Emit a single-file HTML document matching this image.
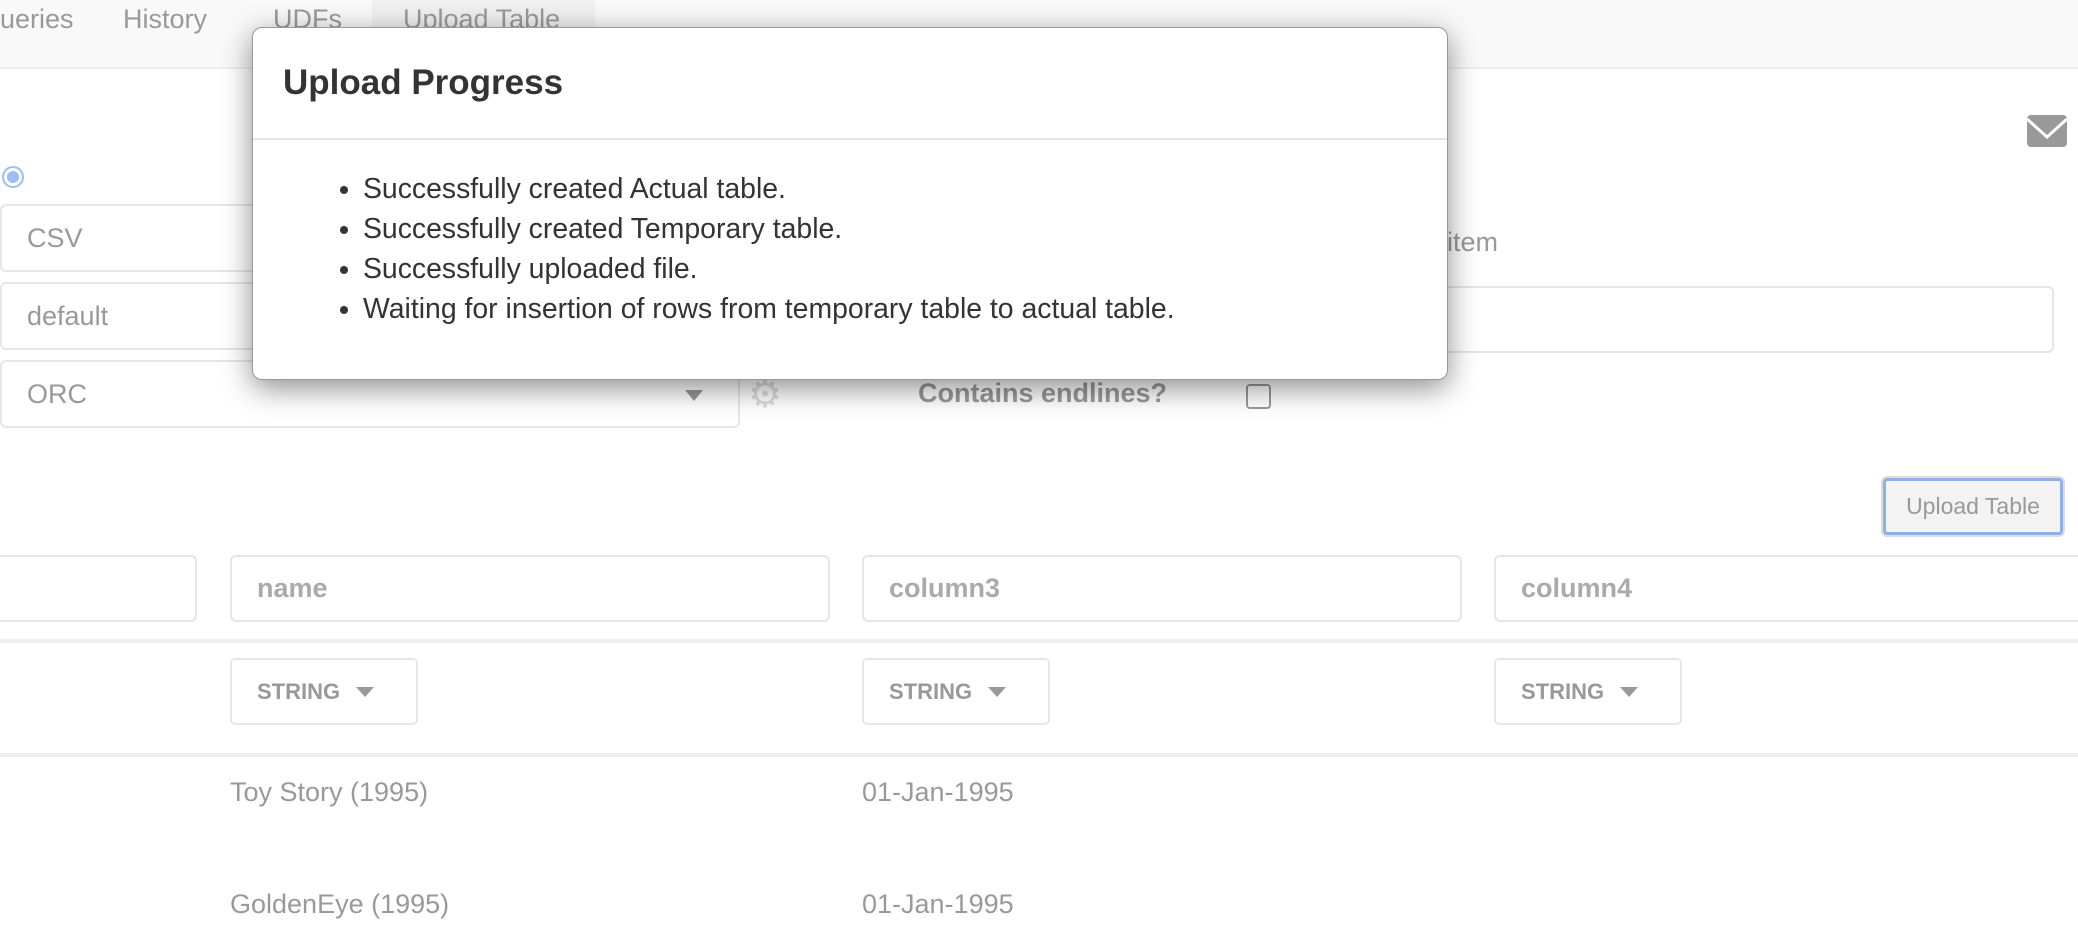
<!DOCTYPE html>
<html><head><meta charset="utf-8"><style>
*{box-sizing:border-box;margin:0;padding:0}
body{width:2078px;height:942px;overflow:hidden;background:#fff;font-family:"Liberation Sans",Arial,sans-serif;position:relative;color:#999}
.abs{position:absolute}
.tabs{left:0;top:0;width:2078px;height:69px;background:#f9f9f9;border-bottom:2px solid #eee}
.tab{position:absolute;top:0;font-size:27px;line-height:38px;color:#999}
.inp{position:absolute;border:2px solid #e6e6e6;border-radius:6px;background:#fff;font-size:27px;color:#999;padding-left:25px;display:flex;align-items:center}
.ph{font-weight:bold;color:#aaa}
.sbtn{position:absolute;border:2px solid #e6e6e6;border-radius:5px;font-size:22px;font-weight:bold;color:#999;display:flex;align-items:center;padding-left:25px}
.sbtn:after{content:"";border-left:9px solid transparent;border-right:9px solid transparent;border-top:10px solid #999;margin-left:16px}
.cell{position:absolute;font-size:27px;color:#999}
.sep{position:absolute;left:0;width:2078px;height:4px;background:#eee}
.modal{left:252px;top:27px;width:1196px;height:353px;background:#fff;border:1px solid #999;border-radius:10px;box-shadow:0 8px 30px rgba(0,0,0,.45)}
.modal h3{position:absolute;left:30px;top:35px;font-size:35px;font-weight:bold;color:#333}
.modal .hr{position:absolute;left:0;top:110px;width:100%;height:2px;background:#e5e5e5}
.modal ul{position:absolute;left:110px;top:141px;font-size:28.4px;line-height:40px;color:#333}
</style></head><body>
<div class="abs tabs">
<div class="tab" style="left:0">ueries</div>
<div class="tab" style="left:123px">History</div>
<div class="tab" style="left:273px">UDFs</div>
<div class="tab" style="left:372px;width:223px;height:69px;background:#f0f0f0;padding-left:31px">Upload Table</div>
</div>
<div class="abs" style="left:2px;top:166px;width:22px;height:22px;border-radius:50%;border:2px solid #9cbdf7;background:#fff"><div style="margin:3px;width:12px;height:12px;border-radius:50%;background:#9cbdf7"></div></div>
<div class="inp" style="left:0;top:204px;width:740px;height:68px">CSV</div>
<div class="inp" style="left:0;top:282px;width:740px;height:68px">default</div>
<div class="inp" style="left:0;top:360px;width:740px;height:68px">ORC<span style="position:absolute;right:35px;top:28px;border-left:9px solid transparent;border-right:9px solid transparent;border-top:11px solid #999"></span></div>
<div class="abs" style="left:748px;top:372px;font-size:38px;color:#ddd">⚙</div>
<div class="abs" style="left:918px;top:378px;font-size:27px;font-weight:bold;color:#999">Contains endlines?</div>
<div class="abs" style="left:1246px;top:384px;width:25px;height:25px;border:2px solid #999;border-radius:4px"></div>
<div class="abs" style="left:1447px;top:227px;font-size:27px;color:#999">item</div>
<div class="inp" style="left:1400px;top:286px;width:654px;height:67px"></div>
<svg class="abs" style="left:2027px;top:115px" width="40" height="32" viewBox="0 0 40 32"><rect x="0" y="0" width="40" height="32" rx="4" fill="#999"/><path d="M0 4 L20 22 L40 4" stroke="#fff" stroke-width="3" fill="none"/></svg>
<div class="abs" style="left:1883px;top:478px;width:180px;height:57px;border:3px solid #8fb0e6;outline:2px solid #ddd;border-radius:4px;background:#f3f3f3;font-size:23px;color:#999;text-align:center;line-height:51px">Upload Table</div>
<div class="inp" style="left:-10px;top:555px;width:207px;height:67px"></div>
<div class="inp" style="left:230px;top:555px;width:600px;height:67px"><span class="ph">name</span></div>
<div class="inp" style="left:862px;top:555px;width:600px;height:67px"><span class="ph">column3</span></div>
<div class="inp" style="left:1494px;top:555px;width:600px;height:67px"><span class="ph">column4</span></div>
<div class="sep" style="top:639px"></div>
<div class="sbtn" style="left:230px;top:658px;width:188px;height:67px">STRING</div>
<div class="sbtn" style="left:862px;top:658px;width:188px;height:67px">STRING</div>
<div class="sbtn" style="left:1494px;top:658px;width:188px;height:67px">STRING</div>
<div class="sep" style="top:753px"></div>
<div class="cell" style="left:230px;top:777px">Toy Story (1995)</div>
<div class="cell" style="left:862px;top:777px">01-Jan-1995</div>
<div class="cell" style="left:230px;top:889px">GoldenEye (1995)</div>
<div class="cell" style="left:862px;top:889px">01-Jan-1995</div>
<div class="abs modal">
<h3>Upload Progress</h3>
<div class="hr"></div>
<ul>
<li>Successfully created Actual table.</li>
<li>Successfully created Temporary table.</li>
<li>Successfully uploaded file.</li>
<li>Waiting for insertion of rows from temporary table to actual table.</li>
</ul>
</div>
</body></html>
